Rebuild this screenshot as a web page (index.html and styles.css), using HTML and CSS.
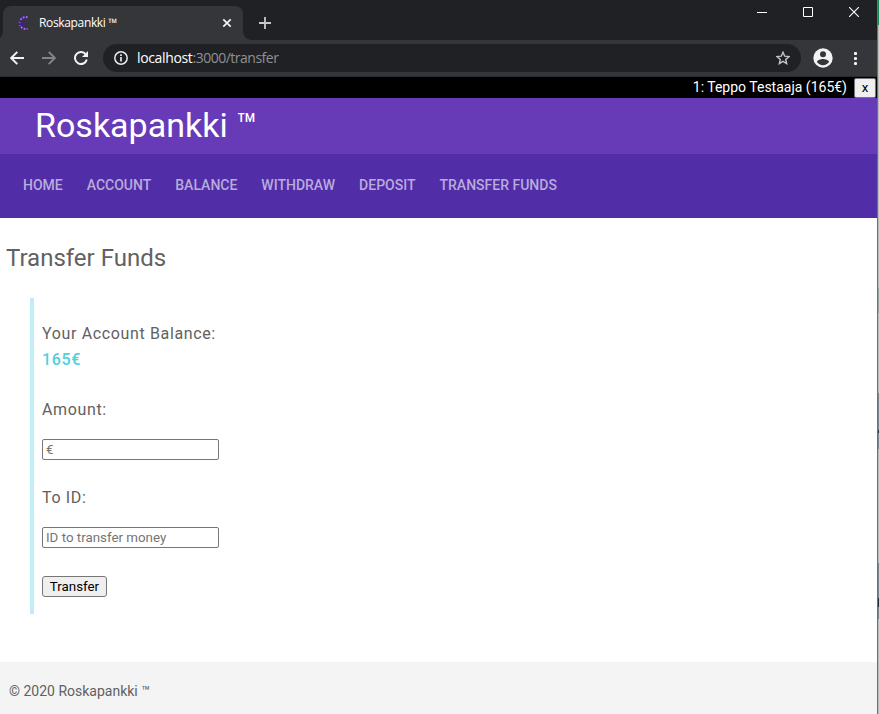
FILE: index.html
```html
<!DOCTYPE html>
<html lang="en">
<head>
<meta charset="utf-8">
<title>Roskapankki ™</title>
<link rel="stylesheet" href="styles.css">
</head>
<body>
<div class="desktop">
<div class="window">
  <div class="tabstrip">
    <div class="tab">
      <svg class="favicon" width="14" height="14" viewBox="0 0 14 14"><path d="M10.500 1.300A6 6 0 1 0 10.500 12.700" fill="none" stroke="#51269b" stroke-width="2.200"/><path d="M10.500 1.300A6 6 0 1 0 10.500 12.700" fill="none" stroke="#9b7be0" stroke-width="1.800" stroke-dasharray="1.600 1.500"/><path d="M2 5.500h8M2 8.500h7" stroke="#41207e" stroke-width="1.300"/></svg>
      <span class="tab-title">Roskapankki ™</span>
      <svg class="tab-close" width="10" height="10" viewBox="0 0 10 10"><path d="M1.300 1.300l7.400 7.400M8.700 1.300L1.300 8.700" stroke="#f1f3f4" stroke-width="1.700"/></svg>
    </div>
    <svg class="new-tab" width="12" height="12" viewBox="0 0 12 12"><path d="M6 0v12M0 6h12" stroke="#c6c8ca" stroke-width="1.800"/></svg>
    <div class="controls">
      <svg width="10" height="10" viewBox="0 0 10 10"><path d="M0 5.500h10" stroke="#fff"/></svg>
      <svg width="10" height="10" viewBox="0 0 10 10"><path d="M.5.500h9v9h-9z" fill="none" stroke="#fff"/></svg>
      <svg width="10" height="10" viewBox="0 0 10 10"><path d="M0 0l10 10M10 0L0 10" stroke="#fff" stroke-width="1.100"/></svg>
    </div>
  </div>
  <div class="toolbar">
    <svg class="nav-icon" width="14" height="14" viewBox="0 0 14 14"><path d="M14 7H1.500M7.300.8L1.200 7l6.100 6.200" fill="none" stroke="#f1f3f4" stroke-width="1.900"/></svg>
    <svg class="nav-icon" width="14" height="14" viewBox="0 0 14 14"><path d="M0 7h12.500M6.700.8L12.800 7l-6.100 6.200" fill="none" stroke="#838488" stroke-width="1.900"/></svg>
    <svg class="nav-icon" width="14" height="14" viewBox="0 0 14 14"><path d="M11.800 3.400A6 6 0 1 0 12.800 8.500" fill="none" stroke="#f1f3f4" stroke-width="2"/><path d="M14 0v6H8z" fill="#f1f3f4"/></svg>
    <div class="address">
      <svg width="14" height="14" viewBox="0 0 14 14"><circle cx="7" cy="7" r="6.200" fill="none" stroke="#e8eaed" stroke-width="1.500"/><path d="M7 6v4.500M7 3.300v1.600" stroke="#e8eaed" stroke-width="1.700"/></svg>
      <span class="url"><b>localhost</b>:3000/transfer</span>
      <svg class="star" width="14" height="14" viewBox="0 0 14 14"><path d="M7 1.200l1.700 4 4.300.4-3.300 2.800 1 4.200L7 10.400l-3.700 2.200 1-4.200L1 5.600l4.300-.4z" fill="none" stroke="#c2c4c6" stroke-width="1.400"/></svg>
    </div>
    <svg class="avatar" width="20" height="20" viewBox="0 0 20 20"><circle cx="10" cy="10" r="9.700" fill="#f1f3f4"/><circle cx="10" cy="6.200" r="3" fill="#35363a"/><path d="M4 14c0-2 4-3 6-3s6 1 6 3c-1.300 2-3.500 3.200-6 3.200S5.300 16 4 14z" fill="#35363a"/></svg>
    <svg class="dots" width="3" height="13" viewBox="0 0 3 13"><g fill="#f1f3f4"><circle cx="1.500" cy="1.500" r="1.600"/><circle cx="1.500" cy="6.500" r="1.600"/><circle cx="1.500" cy="11.500" r="1.600"/></g></svg>
  </div>
  <div class="userbar"><span>1: Teppo Testaaja (165€)</span><button class="logout">x</button></div>
  <header class="banner"><span class="brand">Roskapankki ™</span></header>
  <nav class="menu">
    <a>HOME</a><a>ACCOUNT</a><a>BALANCE</a><a>WITHDRAW</a><a>DEPOSIT</a><a>TRANSFER FUNDS</a>
  </nav>
  <main class="content">
    <h1>Transfer Funds</h1>
    <form class="panel">
      <p class="label">Your Account Balance:</p>
      <p class="amount">165€</p>
      <label class="label label-amount">Amount:</label>
      <input class="field" type="text" placeholder="€">
      <label class="label label-id">To ID:</label>
      <input class="field" type="text" placeholder="ID to transfer money">
      <button class="submit" type="button">Transfer</button>
    </form>
  </main>
  <footer class="footer">© 2020 Roskapankki ™</footer>
</div>
<div class="edge"></div>
</div>
</body>
</html>
```
FILE: styles.css
```css
* { box-sizing: border-box; }
body { margin: 0; font-family: Roboto, sans-serif; color: #616161; overflow: hidden; }
p, h1 { margin: 0; font-weight: 400; }
svg { display: block; flex: none; }
.desktop { display: flex; width: 879px; height: 714px; }
.window { width: 877px; height: 714px; display: flex; flex-direction: column; background: #fff; }
.edge {
  width: 2px;
  border-left: 1px solid #707070;
  background: linear-gradient(#108a55 0 25px, #bdbbb8 25px 288px, #96a19f 288px 313px, #bdbbb8 313px 393px, #7c868e 393px 430px, #30383f 430px 433px, #7c868e 433px 449px, #bdbbb8 449px 563px, #7c868e 563px 598px, #202a30 598px 607px, #7c868e 607px 619px, #bdbbb8 619px);
}

.tabstrip { height: 40px; display: flex; background: #202124; padding: 6px 18px 0 3px; }
.tab {
  position: relative;
  width: 240px;
  height: 34px;
  display: flex;
  align-items: center;
  padding: 0 11px 0 14px;
  background: #35363a;
  border-radius: 8px 8px 0 0;
}
.tab::before, .tab::after { content: ""; position: absolute; bottom: 0; width: 8px; height: 8px; }
.tab::before { left: -8px; background: radial-gradient(circle at 0 0, transparent 7.5px, #35363a 8px); }
.tab::after { right: -8px; background: radial-gradient(circle at 100% 0, transparent 7.5px, #35363a 8px); }
.tab-title { margin-left: 8px; flex: 1; font: 12px/18px "Open Sans", sans-serif; letter-spacing: -.35px; color: #fff; white-space: nowrap; }
.new-tab { margin: 11px 0 0 16px; }
.controls { margin-left: auto; display: flex; gap: 36px; padding-top: 1px; }

.toolbar { height: 37px; display: flex; align-items: center; background: #35363a; border-bottom: 1px solid #292a2d; padding: 0 20px 0 10px; }
.nav-icon { margin-right: 18px; }
.nav-icon:nth-child(3) { margin-right: 15px; }
.address { width: 698px; height: 28px; display: flex; align-items: center; padding: 0 11px; border-radius: 14px; background: #202124; }
.url { margin-left: 9px; font: 14px/20px "Open Sans", sans-serif; letter-spacing: -.5px; color: #8d9196; }
.url b { font-weight: 400; letter-spacing: -.35px; color: #fff; }
.star { margin-left: auto; }
.avatar { margin-left: 12px; }
.dots { margin-left: auto; }

.userbar { height: 21px; display: flex; justify-content: flex-end; align-items: center; background: #000; color: #fff; font-size: 14px; }
.userbar span { line-height: 17px; }
.logout { width: 22px; height: 20px; margin: 0 1px 0 7px; padding: 0; border: 1px solid #767676; border-radius: 2px; background: #efefef; color: #000; font: 13.333px/16px Roboto, sans-serif; }
.banner { height: 56px; padding-left: 35px; background: #673ab7; color: #fff; }
.brand { font-size: 34px; line-height: 55px; }
.menu { height: 64px; display: flex; align-items: center; gap: 24px; padding: 0 23px 2px; background: #512da8; color: #b9abdc; font-size: 14px; font-weight: 500; }

.content { height: 444px; padding: 24px 6px 0; }
h1 { font-size: 24px; line-height: 32px; }
.panel { margin: 24px 0 0 24px; height: 316px; padding: 23px 0 0 8px; border-left: 4px solid #bfeef5; }
.label, .amount { display: block; font-size: 16px; line-height: 26px; letter-spacing: .64px; }
.amount { color: #4dd0e1; font-weight: 500; }
.label-amount { margin-top: 24px; }
.label-id { margin-top: 25px; }
.field { display: block; width: 177px; height: 21px; margin-top: 16px; padding: 1px 3px; border: 1px solid #767676; border-radius: 2px; font: 13.333px Roboto, sans-serif; }
.field::placeholder { color: #757575; }
.submit { display: block; width: 65px; height: 21px; margin-top: 28px; padding: 0; border: 1px solid #767676; border-radius: 3px; background: #efefef; color: #000; font: 13.333px Roboto, sans-serif; }
.footer { height: 52px; padding: 19px 9px 0; background: #f4f4f4; font-size: 14px; line-height: 20px; }
```
